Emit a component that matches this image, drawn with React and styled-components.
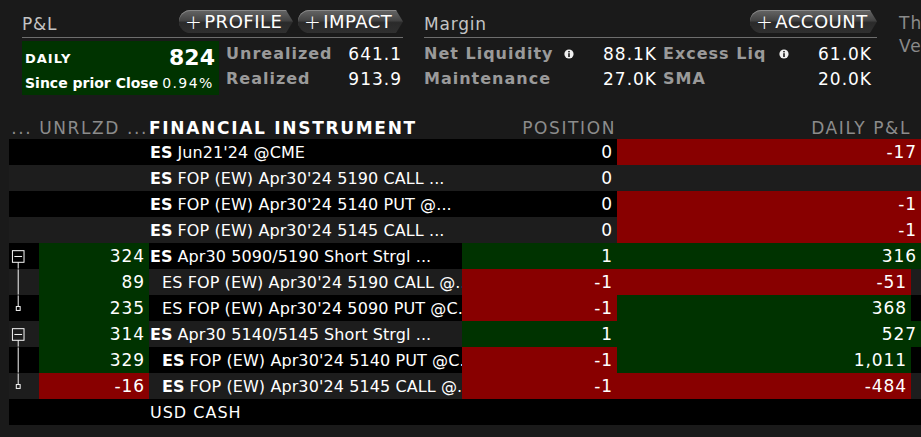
import { styled, createGlobalStyle } from "styled-components";

const GREEN = "#003300";
const RED = "#880000";

const GlobalStyle = createGlobalStyle`
  html, body {
    margin: 0;
    padding: 0;
    background: #1a1a1a;
  }
  body {
    font-family: "DejaVu Sans", Verdana, sans-serif;
    color: #fff;
  }
`;

const rows = [
  { name: "Jun21'24 @CME", pos: "0", pnl: "-17", pnlTone: "red" },
  { name: "FOP (EW) Apr30'24 5190 CALL ...", pos: "0" },
  { name: "FOP (EW) Apr30'24 5140 PUT @...", pos: "0", pnl: "-1", pnlTone: "red" },
  { name: "FOP (EW) Apr30'24 5145 CALL ...", pos: "0", pnl: "-1", pnlTone: "red" },
  {
    tree: "open", unr: "324", unrTone: "green", name: "Apr30 5090/5190 Short Strgl ...",
    pos: "1", posTone: "green", pnl: "316", pnlTone: "green",
  },
  {
    tree: "mid", unr: "89", unrTone: "green", name: "FOP (EW) Apr30'24 5190 CALL @...",
    child: true, plain: true, pos: "-1", posTone: "red", pnl: "-51", pnlTone: "red",
  },
  {
    tree: "end", unr: "235", unrTone: "green", name: "FOP (EW) Apr30'24 5090 PUT @C...",
    child: true, plain: true, pos: "-1", posTone: "red", pnl: "368", pnlTone: "green",
  },
  {
    tree: "open", unr: "314", unrTone: "green", name: "Apr30 5140/5145 Short Strgl ...",
    pos: "1", posTone: "green", pnl: "527", pnlTone: "green",
  },
  {
    tree: "mid", unr: "329", unrTone: "green", name: "FOP (EW) Apr30'24 5140 PUT @C...",
    child: true, pos: "-1", posTone: "red", pnl: "1,011", pnlTone: "green",
  },
  {
    tree: "end", unr: "-16", unrTone: "red", name: "FOP (EW) Apr30'24 5145 CALL @...",
    child: true, pos: "-1", posTone: "red", pnl: "-484", pnlTone: "red",
  },
  { cash: true, name: "USD CASH" },
];

const toneColor = (tone) =>
  tone === "green" ? GREEN : tone === "red" ? RED : "transparent";

const Page = styled.div`
  width: 921px;
  height: 437px;
  overflow: hidden;
  background: #1a1a1a;
`;

const Top = styled.div`
  display: grid;
  grid-template-columns: 381px 453px 60px;
  column-gap: 21px;
  padding: 11px 0 0 22px;
  height: 105px;
  box-sizing: border-box;
`;

const Section = styled.div`
  display: flex;
  flex-direction: column;
  min-width: 0;
`;

const SectionHead = styled.div`
  display: flex;
  align-items: flex-end;
  height: 27px;
  border-bottom: 1px solid #6e6e6e;
  box-sizing: border-box;
`;

const Title = styled.div`
  flex: 1;
  font-size: 17px;
  letter-spacing: 0.8px;
  color: #c4c4c4;
  line-height: 20px;
  padding-bottom: 3px;
`;

const Pill = styled.div`
  display: flex;
  align-items: center;
  height: 23px;
  width: ${(p) => p.$w}px;
  margin-left: ${(p) => p.$gap || 0}px;
  margin-bottom: 4px;
  box-sizing: border-box;
  padding-left: 6px;
  border-radius: 12px 8px 8px 12px;
  background: linear-gradient(#666 0%, #444 45%, #2a2a2a 55%, #303030 100%);
  box-shadow: inset 0 1px 0 #888;
  clip-path: polygon(0 0, calc(100% - 7px) 0, 100% 50%, calc(100% - 7px) 100%, 0 100%);
  font-size: 18px;
  letter-spacing: 0.5px;
  color: #fff;
  white-space: nowrap;
`;

const Plus = styled.span`
  font-weight: 200;
  font-size: 20px;
  margin-right: 2px;
`;

const PnlBody = styled.div`
  display: grid;
  grid-template-columns: 197px 1fr auto;
  grid-template-rows: 25px 25px;
  column-gap: 7px;
  margin-top: 3px;
  margin-right: 1px;
`;

const DailyBox = styled.div`
  grid-row: 1 / span 2;
  height: 54px;
  background: ${GREEN};
  display: grid;
  grid-template-columns: 1fr auto;
  grid-template-rows: 30px 24px;
  align-items: center;
  padding: 0 4px 0 3px;
`;

const DailyLabel = styled.div`
  font-weight: bold;
  font-size: 13px;
  letter-spacing: 1px;
  padding-top: 4px;
`;

const DailyValue = styled.div`
  font-weight: bold;
  font-size: 22px;
  padding-top: 2px;
`;

const Since = styled.div`
  grid-column: 1 / span 2;
  font-size: 14px;
  white-space: nowrap;
  b {
    font-weight: bold;
  }
  span {
    letter-spacing: 1.4px;
    margin-left: 4px;
  }
`;

const Label = styled.div`
  font-weight: bold;
  font-size: 16px;
  letter-spacing: 1px;
  color: #9a9a9a;
  display: flex;
  align-items: center;
  white-space: nowrap;
  padding-left: ${(p) => p.$pl || 0}px;
`;

const Value = styled.div`
  font-size: 17px;
  letter-spacing: 1px;
  color: #fff;
  display: flex;
  align-items: center;
  justify-content: flex-end;
  white-space: nowrap;
`;

const MarginBody = styled.div`
  display: grid;
  grid-template-columns: 140px 10px 83px 122px 10px 83px;
  grid-template-rows: 25px 25px;
  margin-top: 3px;
`;

const InfoWrap = styled.div`
  display: flex;
  align-items: center;
  justify-content: center;
`;

const Cut = styled.div`
  display: flex;
  flex-direction: column;
  gap: 5px;
  padding: 3px 0 0 1px;
  font-size: 17px;
  letter-spacing: 1px;
  color: #8a8a8a;
  line-height: 18px;
  white-space: nowrap;
`;

const Table = styled.div`
  margin-left: 9px;
  margin-top: 11px;
`;

const COLS = "30px 110px 313px 155px 1fr";

const HeadRow = styled.div`
  display: grid;
  grid-template-columns: ${COLS};
  height: 23px;
  align-items: center;
  font-size: 17px;
  white-space: nowrap;
`;

const HeadCell = styled.div`
  grid-column: ${(p) => p.$span || "auto"};
  text-align: ${(p) => p.$align || "right"};
  padding-right: ${(p) => p.$pr || 0}px;
  font-weight: ${(p) => (p.$bold ? "bold" : "normal")};
  color: ${(p) => (p.$bold ? "#fff" : "#8c8c8c")};
  letter-spacing: ${(p) => (p.$bold ? "1.7px" : "1.6px")};
`;

const Row = styled.div`
  display: grid;
  grid-template-columns: ${COLS};
  height: 26px;
  background: ${(p) => (p.$odd ? "#1d1d1d" : "#000")};
  font-size: 16px;
  color: #fff;
`;

const Cell = styled.div`
  display: flex;
  align-items: center;
  justify-content: ${(p) => (p.$right ? "flex-end" : "flex-start")};
  background: ${(p) => toneColor(p.$tone)};
  padding: ${(p) => (p.$right ? "0 4px 0 0" : `0 0 0 ${p.$indent || 1}px`)};
  margin-right: ${(p) => p.$inset || 0}px;
  font-size: ${(p) => (p.$right ? "17px" : "16px")};
  letter-spacing: ${(p) => (p.$right ? "0.9px" : "0.1px")};
  white-space: nowrap;
  overflow: hidden;
  min-width: 0;
  b {
    font-weight: bold;
    margin-right: 0.3em;
  }
`;

const Cash = styled.span`
  letter-spacing: 1px;
`;

const Info = () => (
  <svg width="10" height="10" viewBox="0 0 10 10">
    <circle cx="5" cy="5" r="4.6" fill="#f0f0f0" />
    <rect x="4.2" y="2" width="1.6" height="1.4" fill="#1a1a1a" />
    <rect x="4.2" y="4.2" width="1.6" height="3.8" fill="#1a1a1a" />
  </svg>
);

const Tree = ({ kind }) => {
  if (!kind) return null;
  return (
    <svg width="30" height="26" viewBox="0 0 30 26">
      {kind === "open" && (
        <g stroke="#fff" strokeWidth="1" fill="none">
          <rect x="2.5" y="7.5" width="12" height="12" />
          <line x1="4.5" y1="13.5" x2="12.5" y2="13.5" />
          <line x1="8.5" y1="19.5" x2="8.5" y2="26" />
        </g>
      )}
      {kind === "mid" && (
        <line x1="8.5" y1="0" x2="8.5" y2="26" stroke="#fff" strokeWidth="1" />
      )}
      {kind === "end" && (
        <g stroke="#fff" strokeWidth="1" fill="none">
          <line x1="8.5" y1="0" x2="8.5" y2="11" />
          <rect x="6.5" y="11.5" width="4" height="4" />
        </g>
      )}
    </svg>
  );
};

const App = () => {
  return (
    <Page>
      <GlobalStyle />
      <Top>
        <Section>
          <SectionHead>
            <Title>P&amp;L</Title>
            <Pill $w={114}>
              <Plus>+</Plus>PROFILE
            </Pill>
            <Pill $w={105} $gap={5}>
              <Plus>+</Plus>IMPACT
            </Pill>
          </SectionHead>
          <PnlBody>
            <DailyBox>
              <DailyLabel>DAILY</DailyLabel>
              <DailyValue>824</DailyValue>
              <Since>
                <b>Since prior Close</b>
                <span>0.94%</span>
              </Since>
            </DailyBox>
            <Label>Unrealized</Label>
            <Value>641.1</Value>
            <Label>Realized</Label>
            <Value>913.9</Value>
          </PnlBody>
        </Section>
        <Section>
          <SectionHead>
            <Title>Margin</Title>
            <Pill $w={127}>
              <Plus>+</Plus>ACCOUNT
            </Pill>
          </SectionHead>
          <MarginBody>
            <Label>Net Liquidity</Label>
            <InfoWrap>
              <Info />
            </InfoWrap>
            <Value>88.1K</Value>
            <Label $pl={6}>Excess Liq</Label>
            <InfoWrap>
              <Info />
            </InfoWrap>
            <Value>61.0K</Value>
            <Label>Maintenance</Label>
            <div />
            <Value>27.0K</Value>
            <Label $pl={6}>SMA</Label>
            <div />
            <Value>20.0K</Value>
          </MarginBody>
        </Section>
        <Cut>
          <div>Th</div>
          <div>Ve</div>
        </Cut>
      </Top>
      <Table>
        <HeadRow>
          <HeadCell $span="1 / span 2" $pr={1}>
            ... UNRLZD ...
          </HeadCell>
          <HeadCell $align="left" $bold>
            FINANCIAL INSTRUMENT
          </HeadCell>
          <HeadCell $pr={1}>POSITION</HeadCell>
          <HeadCell $pr={10}>DAILY P&amp;L</HeadCell>
        </HeadRow>
        {rows.map((r, i) => (
          <Row key={i} $odd={i % 2 === 1}>
            <Cell>
              <Tree kind={r.tree} />
            </Cell>
            <Cell $right $tone={r.unrTone}>
              {r.unr}
            </Cell>
            <Cell $indent={r.child ? 13 : 1}>
              {r.cash ? (
                <Cash>{r.name}</Cash>
              ) : r.plain ? (
                <>ES {r.name}</>
              ) : (
                <>
                  <b>ES</b>
                  {r.name}
                </>
              )}
            </Cell>
            <Cell $right $tone={r.posTone}>
              {r.pos}
            </Cell>
            <Cell $right $tone={r.pnlTone} $inset={r.child ? 10 : 0}>
              {r.pnl}
            </Cell>
          </Row>
        ))}
      </Table>
    </Page>
  );
};

export default App;
